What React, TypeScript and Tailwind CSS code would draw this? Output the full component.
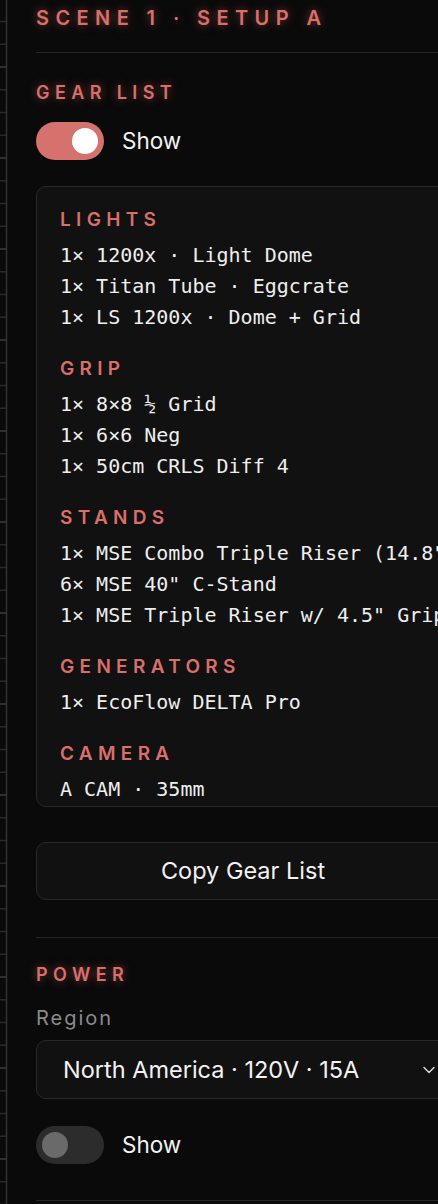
import React from 'react';
import { ChevronDown } from 'lucide-react';

const ui = { fontFamily: 'Inter, "Open Sans", sans-serif' };
const mono = { fontFamily: '"DejaVu Sans Mono", "Liberation Mono", monospace' };
const glow = { textShadow: '0 0 8px rgba(214, 104, 100, 0.55)' };

const gear: { title: string; items: string[] }[] = [
  { title: 'LIGHTS', items: ['1× 1200x · Light Dome', '1× Titan Tube · Eggcrate', '1× LS 1200x · Dome + Grid'] },
  { title: 'GRIP', items: ['1× 8×8 ½ Grid', '1× 6×6 Neg', '1× 50cm CRLS Diff 4'] },
  {
    title: 'STANDS',
    items: ['1× MSE Combo Triple Riser (14.8")', '6× MSE 40" C-Stand', '1× MSE Triple Riser w/ 4.5" Grip Head'],
  },
  { title: 'GENERATORS', items: ['1× EcoFlow DELTA Pro'] },
  { title: 'CAMERA', items: ['A CAM · 35mm'] },
];

// timeline ruler running down the left edge
const Ruler = () => {
  const ticks = Array.from({ length: 56 }, (_, i) => 21.5 + i * 22.75);
  return (
    <svg width="8" height="1204" className="shrink-0">
      {ticks.map((y, i) => (
        <line key={i} x1="0" x2="6" y1={y} y2={y} stroke={i % 4 === 2 ? '#3c3c3c' : '#2a2a2a'} strokeWidth="1.5" />
      ))}
      <line x1="6.5" x2="6.5" y1="0" y2="1204" stroke="#333" strokeWidth="1.5" />
    </svg>
  );
};

const Toggle = ({ on }: { on: boolean }) => (
  <div className="flex items-center gap-[18px]">
    <div
      className={`flex h-[38px] w-[68px] items-center rounded-full px-[6px] ${
        on ? 'justify-end bg-[#d5726e]' : 'justify-start bg-[#2c2c2c]'
      }`}
    >
      <div className={`h-[26px] w-[26px] rounded-full ${on ? 'bg-white' : 'bg-[#6a6a6a]'}`} />
    </div>
    <span className="text-[22.5px] text-[#f2f2f2]" style={ui}>
      Show
    </span>
  </div>
);

const SectionLabel = ({ children }: { children: React.ReactNode }) => (
  <div className="text-[18px] font-semibold leading-[24px] tracking-[0.3em] text-[#da6f6a]" style={{ ...ui, ...glow }}>
    {children}
  </div>
);

export default function App() {
  return (
    <div className="flex h-[1204px] w-[438px] overflow-hidden bg-[#0b0a0a]">
      <Ruler />
      <div className="flex w-[442px] shrink-0 flex-col pl-[28px]" style={ui}>
        <div className="mt-[4px] text-[20px] font-semibold leading-[28px] tracking-[0.32em] text-[#da6f6a]" style={glow}>
          SCENE 1 · SETUP A
        </div>
        <div className="mt-[20px] border-t border-[#272626]" />

        <div className="mt-[28px]">
          <SectionLabel>GEAR LIST</SectionLabel>
        </div>
        <div className="mt-[17px]">
          <Toggle on />
        </div>

        <div className="mt-[26px] h-[621px] overflow-hidden rounded-[10px] border border-[#2a2929] bg-[#121111] pl-[23px] pt-[21px]">
          {gear.map((g, gi) => (
            <div key={g.title} className={gi > 0 ? 'mt-[24px]' : ''}>
              <div className="text-[19px] font-semibold leading-[24px] tracking-[0.28em] text-[#da6f6a]" style={ui}>
                {g.title}
              </div>
              <div className="mt-[8px]">
                {g.items.map((it) => (
                  <div key={it} className="whitespace-nowrap text-[20px] leading-[31px] text-[#eeeeee]" style={mono}>
                    {it}
                  </div>
                ))}
              </div>
            </div>
          ))}
        </div>

        <button className="mt-[35px] flex h-[58px] items-center justify-center rounded-[10px] border border-[#2a2929] bg-[#121111] text-[23.5px] text-[#f2f2f2]">
          Copy Gear List
        </button>

        <div className="mt-[37px] border-t border-[#272626]" />

        <div className="mt-[25px]">
          <SectionLabel>POWER</SectionLabel>
        </div>
        <div className="mt-[18px] text-[20px] leading-[26px] tracking-[0.1em] text-[#8b8b8b]">Region</div>

        <div className="mt-[9px] flex h-[59px] items-center justify-between rounded-[10px] border border-[#2a2929] bg-[#121111] pl-[26px] pr-[10px]">
          <span className="text-[23.5px] text-[#f2f2f2]">North America · 120V · 15A</span>
          <ChevronDown size={20} strokeWidth={1.75} className="text-[#dcdcdc]" />
        </div>

        <div className="mt-[27px]">
          <Toggle on={false} />
        </div>

        <div className="mt-[36px] border-t border-[#272626]" />
      </div>
    </div>
  );
}
